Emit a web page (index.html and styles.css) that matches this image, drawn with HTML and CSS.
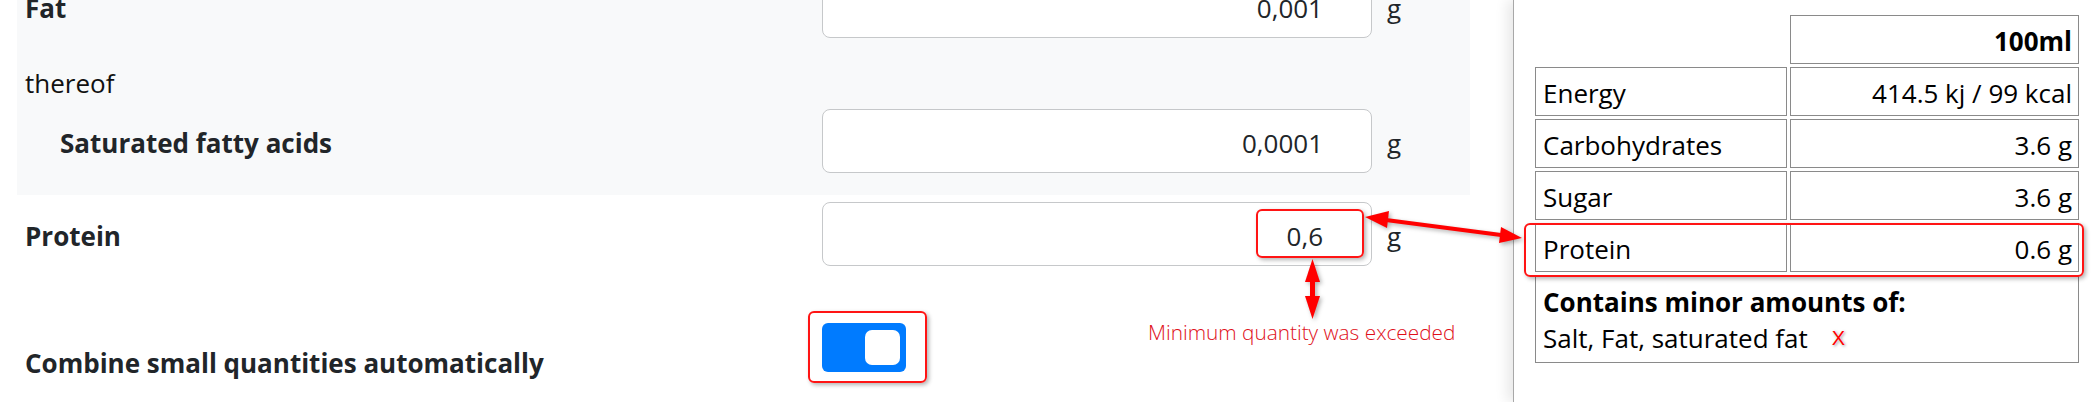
FILE: index.html
```html
<!DOCTYPE html>
<html lang="en">
<head>
<meta charset="utf-8">
<title>Nutrition</title>
<link rel="stylesheet" href="styles.css">
</head>
<body>
<div class="page">
  <main class="form-area">
    <section class="group">
      <div class="row">
        <label class="lbl">Fat</label>
        <div class="input">0,001</div>
        <span class="unit">g</span>
      </div>
      <div class="row row-note">
        <span class="note">thereof</span>
      </div>
      <div class="row row-sat">
        <label class="lbl indent">Saturated fatty acids</label>
        <div class="input">0,0001</div>
        <span class="unit">g</span>
      </div>
    </section>
    <div class="row row-protein">
      <label class="lbl">Protein</label>
      <div class="input">0,6</div>
      <span class="unit">g</span>
    </div>
    <div class="row row-combine">
      <label class="lbl">Combine small quantities automatically</label>
      <div class="switch"><span class="knob"></span></div>
    </div>
  </main>
  <aside class="panel">
    <table class="facts">
      <colgroup><col class="c1"><col class="c2"></colgroup>
      <tr class="head"><th class="blank"></th><th class="val">100ml</th></tr>
      <tr><td>Energy</td><td class="val">414.5 kj / 99 kcal</td></tr>
      <tr><td>Carbohydrates</td><td class="val">3.6 g</td></tr>
      <tr><td>Sugar</td><td class="val">3.6 g</td></tr>
      <tr><td>Protein</td><td class="val">0.6 g</td></tr>
      <tr><td colspan="2" class="contains"><strong>Contains minor amounts of:</strong><br>Salt, Fat, saturated fat<span class="x">X</span></td></tr>
    </table>
  </aside>

  <div class="mark mark-val"></div>
  <div class="mark mark-switch"></div>
  <div class="mark mark-row"></div>
  <div class="hint">Minimum quantity was exceeded</div>
  <svg class="overlay" width="2091" height="402" viewBox="0 0 2091 402">
    <g class="arrows" fill="#f00" stroke="none">
      <line x1="1386" y1="220" x2="1501" y2="235" stroke="#f00" stroke-width="4"/>
      <polygon points="1365,217 1387,228 1389,211"/>
      <polygon points="1522,238 1499,243 1501,227"/>
      <rect x="1310" y="278" width="5" height="22"/>
      <polygon points="1312.5,259 1305,282 1320,282"/>
      <polygon points="1312.5,319 1305,296 1320,296"/>
    </g>
  </svg>
</div>
</body>
</html>
```
FILE: styles.css
```css
html, body {
  margin: 0;
  height: 100%;
  overflow: hidden;
  background: #fff;
}

body {
  font-family: "Open Sans", "Noto Sans", sans-serif;
  font-size: 26px;
  line-height: 36px;
  color: #212529;
}

.page {
  position: relative;
  display: flex;
  width: 2091px;
  height: 402px;
}

.form-area {
  width: 1496px;
  flex: none;
  padding-left: 17px;
  margin-top: -34px;
}

.group {
  width: 1453px;
  box-sizing: border-box;
  background: #f8f9fa;
  padding: 8px 8px 22px;
}

.row {
  display: grid;
  grid-template-columns: 797px 550px auto;
  align-items: center;
}

.form-area > .row {
  padding-left: 8px;
}

.lbl {
  font-weight: 700;
  color: #212529;
  padding-top: 3px;
}

.lbl.indent {
  padding-left: 35px;
}

.row-note {
  margin-top: 27px;
  height: 36px;
}

.note {
  color: #111;
}

.row-sat {
  margin-top: 8px;
}

.row-protein {
  margin-top: 7px;
}

.row-combine {
  margin-top: 57px;
  align-items: start;
}

.row-combine .lbl {
  padding-top: 22px;
}

.input {
  height: 64px;
  box-sizing: border-box;
  border: 1px solid #c6c8ca;
  border-radius: 8px;
  background: #fff;
  display: flex;
  align-items: center;
  justify-content: flex-end;
  padding-right: 48px;
  padding-top: 4px;
  color: #212529;
}

.unit {
  padding-left: 15px;
  padding-top: 3px;
}

.switch {
  width: 84px;
  height: 49px;
  box-sizing: border-box;
  background: #007bff;
  border-radius: 6px;
  display: flex;
  justify-content: flex-end;
  padding: 7px 6px;
}

.knob {
  width: 35px;
  height: 35px;
  background: #fff;
  border-radius: 7px;
}

.panel {
  flex: 1;
  position: relative;
  z-index: 1;
  background: #fff;
  border-left: 1px solid #a8a8a8;
  box-shadow: -6px 0 12px rgba(0, 0, 0, 0.09);
  padding: 12px 0 0 18px;
}

.facts {
  border-collapse: separate;
  border-spacing: 3px;
  width: 550px;
  table-layout: fixed;
  color: #000;
}

.c1 { width: 252px; }
.c2 { width: 289px; }

.facts td,
.facts th {
  border: 1px solid #8a8a8a;
  height: 49px;
  box-sizing: border-box;
  padding: 2px 7px 0;
  vertical-align: middle;
  text-align: left;
  font-weight: 400;
}

.facts th.val {
  font-weight: 700;
}

.facts th.blank {
  border: none;
}

.facts .val {
  text-align: right;
  padding-right: 6px;
}

.facts td.contains {
  height: 88px;
  padding: 8px 7px 6px;
}

.x {
  font-family: "Liberation Sans", sans-serif;
  color: #f00;
  font-size: 20px;
  margin-left: 24px;
  vertical-align: 3px;
  text-shadow: 0 0 2px #fff, 1px 1px 3px rgba(0, 0, 0, 0.45);
}

.mark {
  position: absolute;
  z-index: 3;
  box-sizing: border-box;
  border: 2px solid #ff1414;
  border-radius: 6px;
  box-shadow: 2px 2px 4px rgba(0, 0, 0, 0.3);
}

.mark-val {
  left: 1256px;
  top: 209px;
  width: 108px;
  height: 49px;
}

.mark-switch {
  left: 808px;
  top: 311px;
  width: 119px;
  height: 72px;
}

.mark-row {
  left: 1524px;
  top: 223px;
  width: 560px;
  height: 54px;
}

.hint {
  position: absolute;
  z-index: 3;
  left: 1148px;
  top: 320px;
  font-size: 20.8px;
  line-height: 24px;
  font-weight: 300;
  color: #e0101a;
  white-space: nowrap;
}

.overlay {
  position: absolute;
  left: 0;
  top: 0;
  z-index: 3;
  pointer-events: none;
}

.arrows {
  filter: drop-shadow(2px 2px 2px rgba(0, 0, 0, 0.3));
}
```
